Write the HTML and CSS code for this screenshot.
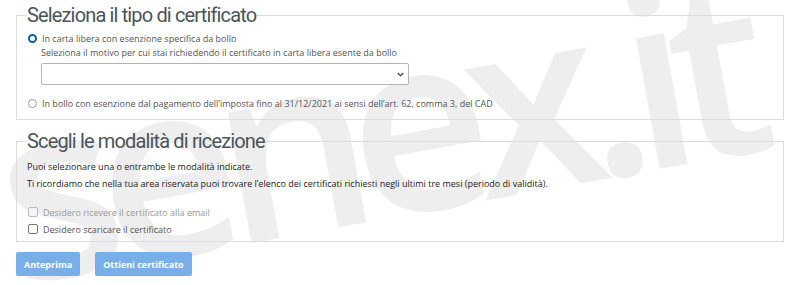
FILE: index.html
```html
<!DOCTYPE html>
<html lang="it">
<head>
<meta charset="utf-8">
<link rel="stylesheet" href="styles.css">
</head>
<body>
<div class="page">
  <div class="watermark">senex.it</div>
  <fieldset class="box box-tipo">
    <legend class="box-title">Seleziona il tipo di certificato</legend>
    <div class="option">
      <span class="radio checked"></span>
      <span class="opt-label">In carta libera con esenzione specifica da bollo</span>
    </div>
    <div class="sub">
      <div class="hint">Seleziona il motivo per cui stai richiedendo il certificato in carta libera esente da bollo</div>
      <div class="select">
        <svg class="chev" width="7" height="5" viewBox="0 0 7 5"><path d="M0.8 1 L3.5 3.8 L6.2 1" fill="none" stroke="#333" stroke-width="1.1"/></svg>
      </div>
    </div>
    <div class="option option-2">
      <span class="radio"></span>
      <span class="opt-label">In bollo con esenzione dal pagamento dell’imposta fino al 31/12/2021 ai sensi dell’art. 62, comma 3, del CAD</span>
    </div>
  </fieldset>

  <fieldset class="box box-ricezione">
    <legend class="box-title">Scegli le modalità di ricezione</legend>
    <p class="text">Puoi selezionare una o entrambe le modalità indicate.</p>
    <p class="text">Ti ricordiamo che nella tua area riservata puoi trovare l’elenco dei certificati richiesti negli ultimi tre mesi (periodo di validità).</p>
    <div class="checks">
      <div class="check disabled"><span class="cbox"></span><span>Desidero ricevere il certificato alla email</span></div>
      <div class="check"><span class="cbox"></span><span>Desidero scaricare il certificato</span></div>
    </div>
  </fieldset>

  <div class="actions">
    <span class="btn">Anteprima</span>
    <span class="btn">Ottieni certificato</span>
  </div>
</div>
</body>
</html>
```

FILE: styles.css
```css
* { box-sizing: border-box; }
html, body { margin: 0; padding: 0; background: #fff; }
body {
  font-family: "Open Sans", "Noto Sans", sans-serif;
  font-size: 9px;
  color: #333;
  width: 800px;
  height: 285px;
  overflow: hidden;
}
.page {
  position: relative;
  padding: 2px 16px 0 16px;
  width: 800px;
  height: 285px;
  overflow: hidden;
}
.watermark {
  position: absolute;
  left: -22px;
  top: 72px;
  font-family: "Open Sans", sans-serif;
  font-weight: 600;
  font-size: 245px;
  line-height: 245px;
  letter-spacing: -21px;
  color: #eeeeee;
  transform: rotate(-10.3deg);
  transform-origin: 0 0;
  white-space: nowrap;
  z-index: 0;
}
.box {
  position: relative;
  z-index: 1;
  margin: 0;
  border: 1px solid #dcdcdc;
  padding: 0 10px 0 10px;
  width: 768px;
  min-width: 0;
}
.box-title {
  padding: 0;
  margin-left: 0;
  font-family: "Roboto", sans-serif;
  font-size: 20px;
  letter-spacing: -0.85px;
  line-height: 26px;
  color: #4b5459;
  font-weight: 400;
}
.box-tipo { padding-top: 4px; padding-bottom: 10px; }
.box-ricezione { margin-top: 8px; padding-top: 4px; padding-bottom: 6px; }
.option {
  display: flex;
  align-items: center;
  gap: 5px;
  height: 12px;
  color: #555;
}
.option-2 { margin-top: 12px; }
.radio {
  width: 9px; height: 9px; border-radius: 50%;
  border: 1px solid #999;
  flex: none;
  margin-left: 1px;
}
.radio.checked {
  border: 2.5px solid #0a5ea8;
  background: #fff;
}
.sub { padding-left: 14px; }
.hint { color: #555; line-height: 14px; margin-top: 2px; }
.select {
  margin-top: 3px;
  width: 368px;
  height: 22px;
  border: 1px solid #b5b5b5;
  border-radius: 2px;
  background: #fff;
  display: flex;
  align-items: center;
  justify-content: flex-end;
  padding-right: 4px;
}
.text { margin: 0; line-height: 17px; color: #222; }
.checks { margin-top: 14px; display: flex; flex-direction: column; gap: 5px; }
.check { display: flex; align-items: center; gap: 5px; color: #555; height: 12px; }
.check.disabled { color: #999; }
.cbox {
  width: 10px; height: 10px; border: 1px solid #777; border-radius: 2px; flex: none; margin-left: 1px;
}
.check.disabled .cbox { border-color: #bbb; background: #f4f4f4; }
.actions {
  position: relative; z-index: 1;
  display: flex; gap: 15px; margin-top: 10px;
}
.btn {
  display: inline-flex; align-items: center; justify-content: center;
  height: 24px;
  padding: 0 8px;
  background: #78afe9;
  color: #fff;
  font-weight: 700;
  font-size: 9px;
  border-radius: 2px;
}
```
